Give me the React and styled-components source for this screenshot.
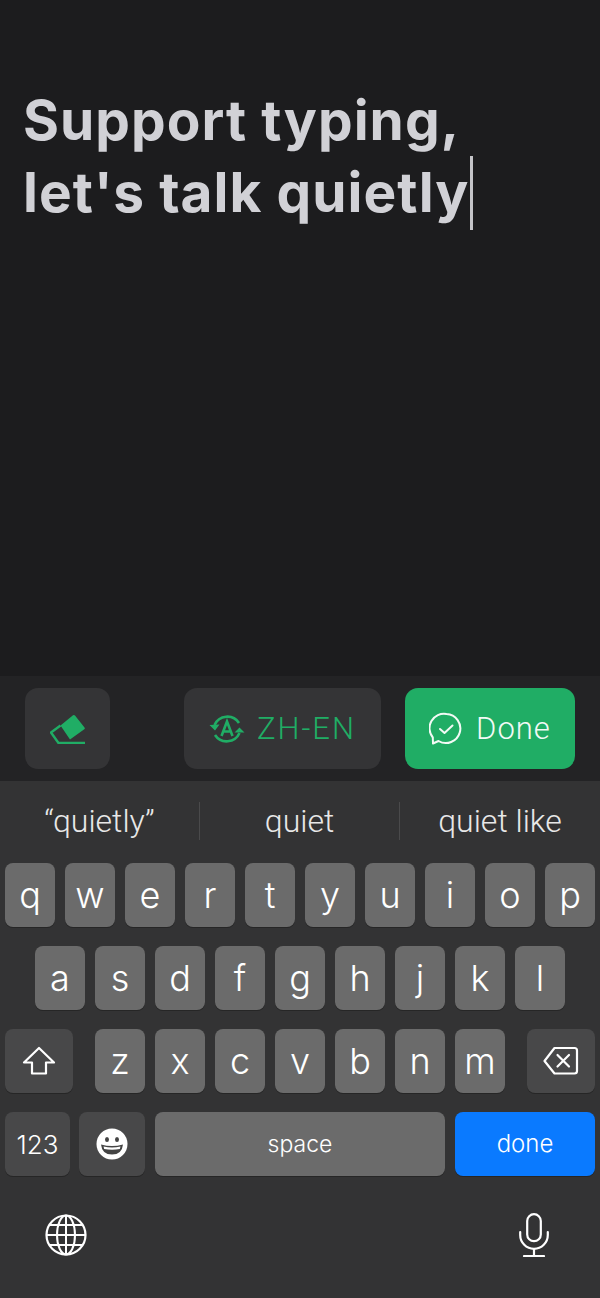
import React from 'react';
import styled, { createGlobalStyle } from 'styled-components';

const Global = createGlobalStyle`
  html, body { margin: 0; padding: 0; background: #1c1c1e; }
  * { box-sizing: border-box; }
`;

const Page = styled.div`
  width: 600px; height: 1298px; display: flex; flex-direction: column;
  font-family: Inter, "Liberation Sans", sans-serif; overflow: hidden;
`;
const Editor = styled.div`
  height: 676px; background: #1c1c1e; padding: 84px 23px 0;
`;
const Heading = styled.div`
  font: 700 55px/72px Inter, "Liberation Sans", sans-serif; letter-spacing: 1.05px; color: #d1d1d6; white-space: nowrap;
`;
const Caret = styled.span`
  display: inline-block; width: 2.5px; height: 74px; background: #c4c4c8;
  vertical-align: -18px; margin-left: 1px; margin-right: -4px;
`;
const Toolbar = styled.div`
  height: 105px; background: #232325; display: flex; align-items: flex-start;
  padding: 12px 25px 0 25px;
`;
const ToolBtn = styled.div`
  height: 81px; width: ${p => p.$w}px; margin-left: ${p => p.$ml || 0}px;
  border-radius: 13px; background: ${p => p.$green ? '#20ad65' : '#343436'};
  color: ${p => p.$green ? '#f2faf5' : '#20ad65'};
  display: flex; align-items: center; justify-content: center; gap: ${p => p.$gap || 0}px;
  font: 300 31px/1 Roboto, "Noto Sans", sans-serif; letter-spacing: ${p => p.$ls || 1}px;
`;
const Keyboard = styled.div`
  flex: 1; background: #333334; display: flex; flex-direction: column;
`;
const Suggestions = styled.div`
  height: 82px; display: grid; grid-template-columns: 199px 200px 201px; padding-top: 21px;
`;
const Suggestion = styled.div`
  height: 38px; display: flex; align-items: center; justify-content: center;
  color: #e8e8e8; font: 300 32px/1 Roboto, "Liberation Sans", sans-serif;
  border-left: ${p => p.$sep ? '1px solid #4a4a4b' : 'none'};
`;
const Rows = styled.div`
  display: flex; flex-direction: column; gap: 19px;
`;
const Row = styled.div`
  display: flex; height: 64px; padding: 0 5px; gap: 10px; justify-content: ${p => p.$justify || 'flex-start'};
`;
const Key = styled.div`
  width: ${p => p.$w || 50}px; flex: ${p => p.$grow ? 1 : 'none'};
  margin-left: ${p => p.$ml || 0}px; margin-right: ${p => p.$mr || 0}px;
  height: 64px; border-radius: 8px;
  background: ${p => p.$bg || '#6b6b6b'};
  box-shadow: 0 1px 0 #262626;
  color: #fff; display: flex; align-items: center; justify-content: center;
  font: 300 ${p => p.$fs || 36}px/1 Inter, "Liberation Sans", sans-serif;
  padding-top: ${p => p.$pt || 0}px;
  padding-bottom: ${p => p.$pb || 0}px;
`;
const BottomBar = styled.div`
  display: flex; justify-content: space-between; align-items: center;
  padding: 37px 51px 0 45px;
`;

const Eraser = () => (
  <svg width="36" height="30" viewBox="0 0 36 30" fill="none">
    <path d="M10.5 11.5 L23 1.3 a1.6 1.6 0 0 1 2 .3 L34.5 13.5 a1.2 1.2 0 0 1-.2 1.8 L20 25.5 Z" fill="#20ad65" />
    <path d="M10.5 11.5 L1 18.5 L8.5 29 H35" stroke="#20ad65" strokeWidth="2.4" strokeLinejoin="round" />
  </svg>
);
const Translate = () => (
  <svg width="36" height="32" viewBox="0 0 36 32" fill="none" stroke="#20ad65">
    <path d="M5.5 12 A14 14 0 0 1 30 10" strokeWidth="2.6" />
    <path d="M30.5 20 A14 14 0 0 1 6 22" strokeWidth="2.6" />
    <path d="M0.5 12 L6 17.5 L10.5 11.5Z M25.5 19.5 L30.5 14.5 L35.5 19.5Z" fill="#20ad65" stroke="none" />
    <path d="M12.5 23 L18 8.5 L23.5 23 M14.5 18.5 H21.5" strokeWidth="2.6" />
  </svg>
);
const ChatCheck = () => (
  <svg width="34" height="34" viewBox="0 0 34 34" fill="none" stroke="#f2faf5" strokeWidth="2">
    <path d="M17.5 2 A14.5 14.5 0 1 1 9.5 29 L4 31.5 L3.8 25.5 A14.5 14.5 0 0 1 17.5 2Z" strokeLinejoin="round" />
    <path d="M11 17 L15.5 21 L23.5 13.5" strokeLinecap="round" strokeLinejoin="round" />
  </svg>
);
const Shift = () => (
  <svg width="34" height="30" viewBox="0 0 34 30" fill="none" stroke="#fff" strokeWidth="2.2" strokeLinejoin="round">
    <path d="M17 2 L32 16.5 H24 V27.5 H10 V16.5 H2 Z" />
  </svg>
);
const Backspace = () => (
  <svg width="36" height="30" viewBox="0 0 36 30" fill="none" stroke="#fff" strokeWidth="2.2" strokeLinejoin="round">
    <path d="M11.5 2 H31.5 a2.5 2.5 0 0 1 2.5 2.5 V25 a2.5 2.5 0 0 1-2.5 2.5 H11.5 L1.5 15 Z" />
    <path d="M14.5 9 L26 20.5 M26 9 L14.5 20.5" strokeLinecap="round" />
  </svg>
);
const Emoji = () => (
  <svg width="32" height="32" viewBox="0 0 32 32">
    <circle cx="16" cy="16" r="15.5" fill="#fff" />
    <ellipse cx="11" cy="11.5" rx="2" ry="2.6" fill="#444" />
    <ellipse cx="21" cy="11.5" rx="2" ry="2.6" fill="#444" />
    <path d="M5 16.5 Q16 19.5 27 16.5 Q26 26.5 16 26.5 Q6 26.5 5 16.5Z" fill="#444" />
    <path d="M7.5 18.6 Q16 20.6 24.5 18.6 L23.8 21 Q16 22.6 8.2 21Z" fill="#fff" />
  </svg>
);
const Globe = () => (
  <svg width="42" height="42" viewBox="0 0 42 42" fill="none" stroke="#fff" strokeWidth="2">
    <circle cx="21" cy="21" r="19.5" strokeWidth="2.2" />
    <ellipse cx="21" cy="21" rx="9" ry="19.5" />
    <path d="M21 1.5 V40.5 M1.5 21 H40.5 M4.5 11 H37.5 M4.5 31 H37.5" />
  </svg>
);
const Mic = () => (
  <svg width="30" height="44" viewBox="0 0 30 44" fill="none" stroke="#fff" strokeWidth="2.2" strokeLinecap="round">
    <rect x="8.2" y="1.2" width="13.6" height="27" rx="6.8" />
    <path d="M1.2 19 V22 a13.8 13.8 0 0 0 27.6 0 V19" />
    <path d="M15 36 V43 M5 43 H25" />
  </svg>
);

const row1 = ['q','w','e','r','t','y','u','i','o','p'];
const row2 = ['a','s','d','f','g','h','j','k','l'];
const row3 = ['z','x','c','v','b','n','m'];
const DARK = '#484849';

export default function App() {
  return (
    <Page>
      <Global />
      <Editor>
        <Heading>Support typing,<br />let's talk quietly<Caret /></Heading>
      </Editor>
      <Toolbar>
        <ToolBtn $w={85}><Eraser /></ToolBtn>
        <ToolBtn $w={197} $ml={74} $gap={12} $ls={2}><Translate />ZH-EN</ToolBtn>
        <ToolBtn $w={170} $ml={24} $green $gap={13}><ChatCheck />Done</ToolBtn>
      </Toolbar>
      <Keyboard>
        <Suggestions>
          <Suggestion>“quietly”</Suggestion>
          <Suggestion $sep>quiet</Suggestion>
          <Suggestion $sep>quiet like</Suggestion>
        </Suggestions>
        <Rows>
          <Row>{row1.map(k => <Key key={k}>{k}</Key>)}</Row>
          <Row $justify="center">{row2.map(k => <Key key={k}>{k}</Key>)}</Row>
          <Row>
            <Key $w={68} $mr={12} $bg={DARK}><Shift /></Key>
            {row3.map(k => <Key key={k}>{k}</Key>)}
            <Key $w={68} $ml={12} $bg={DARK}><Backspace /></Key>
          </Row>
          <Row>
            <Key $w={65} $mr={-1} $bg={DARK} $fs={26} $pt={2}>123</Key>
            <Key $w={66} $bg={DARK}><Emoji /></Key>
            <Key $grow $fs={23}>space</Key>
            <Key $w={140} $bg="#0a7aff" $fs={24}>done</Key>
          </Row>
        </Rows>
        <BottomBar><Globe /><Mic /></BottomBar>
      </Keyboard>
    </Page>
  );
}
